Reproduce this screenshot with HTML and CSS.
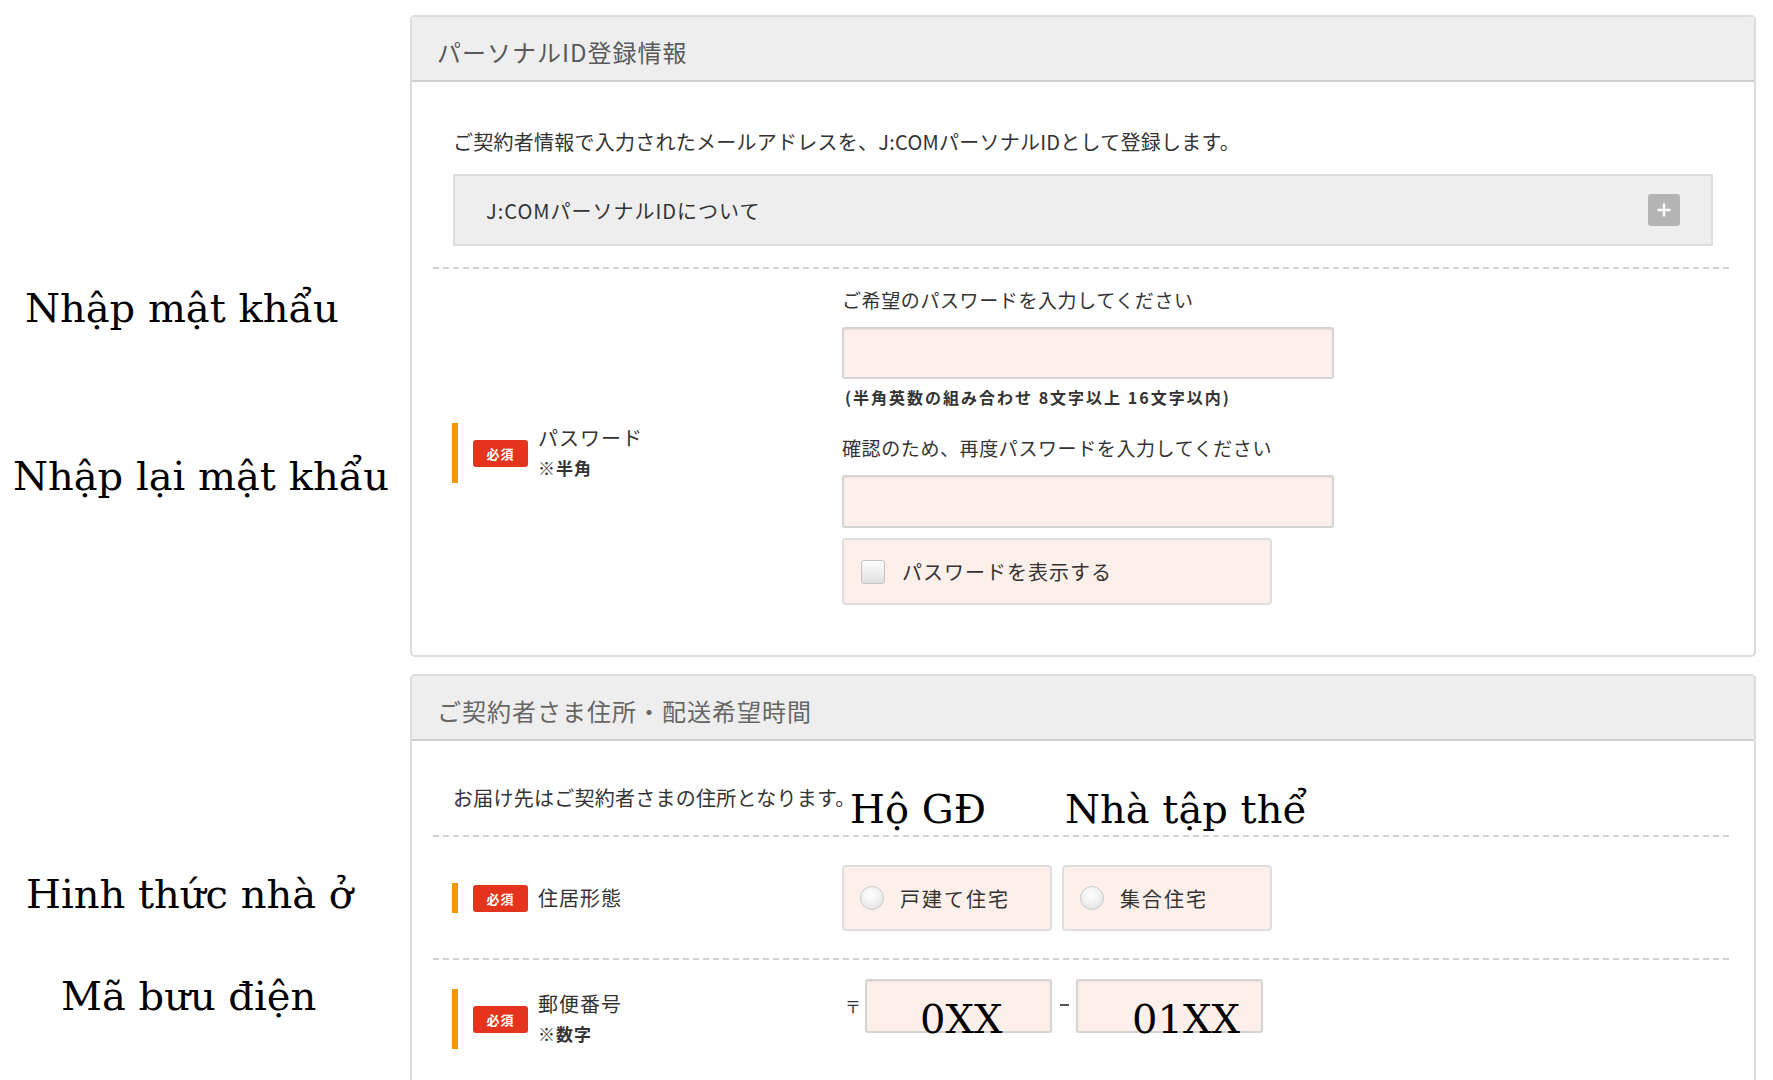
FILE: index.html
```html
<!DOCTYPE html>
<html lang="ja">
<head>
<meta charset="utf-8">
<title>パーソナルID登録情報</title>
<link rel="stylesheet" href="styles.css">
</head>
<body>
<div class="page">
  <main class="form">
    <section class="panel">
      <header class="panel-head"><h2 class="panel-title">パーソナルID登録情報</h2></header>
      <div class="panel-body">
        <p class="lead">ご契約者情報で入力されたメールアドレスを、J:COMパーソナルIDとして登録します。</p>
        <div class="accordion">
          <span class="acc-label">J:COMパーソナルIDについて</span>
          <span class="acc-btn"><svg width="16" height="16" viewBox="0 0 16 16"><path d="M8 1.5v13M1.5 8h13" stroke="#fff" stroke-width="2.4" fill="none"/></svg></span>
        </div>
        <div class="row row-pw">
          <div class="row-label">
            <span class="bar"></span>
            <span class="badge">必須</span>
            <span class="label-text"><span>パスワード</span><span class="lt-sub">※半角</span></span>
          </div>
          <div class="row-field">
            <p class="field-label">ご希望のパスワードを入力してください</p>
            <div class="input"></div>
            <p class="note">(半角英数の組み合わせ 8文字以上 16文字以内)</p>
            <p class="field-label second">確認のため、再度パスワードを入力してください</p>
            <div class="input tall"></div>
            <div class="check"><span class="checkbox"></span><span>パスワードを表示する</span></div>
          </div>
        </div>
      </div>
    </section>

    <section class="panel">
      <header class="panel-head"><h2 class="panel-title title2">ご契約者さま住所・配送希望時間</h2></header>
      <div class="panel-body">
        <p class="lead lead2">お届け先はご契約者さまの住所となります。</p>
        <div class="row row-radio">
          <div class="row-label">
            <span class="bar"></span>
            <span class="badge">必須</span>
            <span class="label-text"><span>住居形態</span></span>
          </div>
          <div class="row-field radios">
            <div class="radio"><span class="radio-dot"></span><span>戸建て住宅</span></div>
            <div class="radio"><span class="radio-dot"></span><span>集合住宅</span></div>
          </div>
        </div>
        <div class="row row-zip">
          <div class="row-label">
            <span class="bar"></span>
            <span class="badge">必須</span>
            <span class="label-text"><span>郵便番号</span><span class="lt-sub">※数字</span></span>
          </div>
          <div class="row-field zips">
            <span class="zip-mark">〒</span>
            <div class="input zip"></div>
            <span class="zip-dash"><span class="zip-dash-line"></span></span>
            <div class="input zip"></div>
          </div>
        </div>
        <div class="row row-next"></div>
      </div>
    </section>
  </main>

  <span class="vi vi-pw">Nhập mật khẩu</span>
  <span class="vi vi-pw2">Nhập lại mật khẩu</span>
  <span class="vi vi-house">Hinh thức nhà ở</span>
  <span class="vi vi-zip">Mã bưu điện</span>
  <span class="vi vi-ho">Hộ GĐ</span>
  <span class="vi vi-tap">Nhà tập thể</span>
  <span class="vi vi-z1">0XX</span>
  <span class="vi vi-z2">01XX</span>
</div>
</body>
</html>
```

FILE: styles.css
```css
* { box-sizing: border-box; }
html, body { margin: 0; padding: 0; background: #fff; }
body {
  width: 1773px;
  height: 1080px;
  overflow: hidden;
  font-family: "Noto Sans CJK JP", "Noto Sans", sans-serif;
  color: #333;
}
.page {
  position: relative;
  display: flex;
  padding: 15px 0 0 410px;
}
.form {
  width: 1346px;
  display: flex;
  flex-direction: column;
  gap: 17px;
}
.panel {
  border: 2px solid #dcdcdc;
  border-radius: 5px;
  background: #fff;
  overflow: hidden;
}
.panel-head {
  background: #eeeeee;
  border-bottom: 2px solid #cfcfcf;
  padding: 20px 25px 13px;
}
.panel-title {
  margin: 0;
  font-size: 24px;
  line-height: 30px;
  font-weight: normal;
  color: #5a5a5a;
  letter-spacing: 1px;
}
.title2 { color: #666; }
.panel-body { padding: 0 22px 0 21px; }
.lead {
  margin: 0;
  padding: 45px 0 0 20px;
  font-size: 20px;
  line-height: 30px;
  letter-spacing: 0.25px;
}
.lead2 { padding-top: 42px; }
.accordion {
  margin: 17px 19px 0 20px;
  height: 72px;
  border: 2px solid #dedede;
  background: #eeeeee;
  display: flex;
  align-items: center;
  justify-content: space-between;
  padding: 0 31px;
  font-size: 20px;
  letter-spacing: 1px;
}
.acc-btn {
  width: 32px;
  height: 32px;
  background: #b4b4b4;
  border-radius: 3px;
  display: flex;
  align-items: center;
  justify-content: center;
}
.row {
  display: flex;
  padding-left: 19px;
  background-image: repeating-linear-gradient(to right, #d2d2d2 0 6px, transparent 6px 10px);
  background-size: 100% 2px;
  background-repeat: no-repeat;
  background-position: top left;
}
.row-pw { margin-top: 21px; padding-top: 18px; padding-bottom: 50px; }
.row-radio { margin-top: 22px; padding-top: 30px; padding-bottom: 27px; align-items: center; }
.row-zip { padding-top: 21px; padding-bottom: 37px; align-items: flex-start; }
.row-next { height: 120px; }
.row-label {
  width: 390px;
  flex: none;
  display: flex;
  align-items: stretch;
}
.row-pw .row-label { align-self: center; margin-top: 16px; }
.row-zip .row-label { margin-top: 10px; }
.bar { width: 6px; background: #f39800; margin-right: 15px; flex: none; }
.badge {
  align-self: center;
  width: 55px;
  height: 27px;
  flex: none;
  background: #e5341d;
  color: #fff;
  border-radius: 3px;
  font-size: 13px;
  font-weight: bold;
  display: flex;
  align-items: center;
  justify-content: center;
  margin-right: 10px;
  letter-spacing: 1px;
}
.label-text {
  display: flex;
  flex-direction: column;
  font-size: 20px;
  line-height: 30px;
  letter-spacing: 1px;
}
.lt-sub { font-size: 17px; font-weight: bold; }
.row-field { display: flex; flex-direction: column; }
.field-label {
  margin: 0;
  font-size: 19px;
  line-height: 30px;
  letter-spacing: 0.6px;
}
.field-label.second { margin-top: 25px; }
.input {
  margin-top: 12px;
  width: 492px;
  height: 52px;
  background: #fdefea;
  border: 2px solid #d4d4d4;
  border-radius: 3px;
  box-shadow: inset 0 1px 2px rgba(0,0,0,0.06);
}
.input.tall { height: 53px; }
.note {
  margin: 7px 0 0;
  padding-left: 3px;
  font-size: 16px;
  line-height: 22px;
  letter-spacing: 2px;
  font-weight: bold;
}
.check {
  margin-top: 10px;
  width: 430px;
  height: 67px;
  display: flex;
  align-items: center;
  padding-left: 17px;
  background: #fdefea;
  border: 2px solid #dedede;
  border-radius: 4px;
  font-size: 20px;
  letter-spacing: 1px;
}
.checkbox {
  width: 24px;
  height: 24px;
  border: 1px solid #c4c4c4;
  border-radius: 3px;
  background: linear-gradient(#fdfdfd, #e0e0e0);
  margin-right: 17px;
}
.radios { flex-direction: row; gap: 10px; }
.radio {
  width: 210px;
  height: 66px;
  display: flex;
  align-items: center;
  padding-left: 16px;
  background: #fdefea;
  border: 2px solid #dedede;
  border-radius: 4px;
  font-size: 20px;
  letter-spacing: 2px;
}
.radio-dot {
  width: 24px;
  height: 24px;
  border-radius: 50%;
  border: 1px solid #cacaca;
  background: radial-gradient(circle at 45% 35%, #ffffff 0, #f2f2f2 45%, #d8d8d8 100%);
  margin-right: 16px;
}
.zips { flex-direction: row; align-items: center; }
.zip-mark { width: 23px; padding-left: 3px; font-size: 16px; }
.input.zip { margin-top: 0; width: 187px; height: 54px; }
.zip-dash { width: 24px; display: flex; justify-content: center; align-items: center; }
.zip-dash-line { display: block; width: 9px; height: 2px; background: #555; margin-top: -2px; }

.vi {
  position: absolute;
  font-family: "DejaVu Serif", serif;
  font-size: 40px;
  line-height: 1;
  color: #000;
  white-space: nowrap;
}
.vi-pw { left: 25px; top: 288px; }
.vi-pw2 { left: 13px; top: 456px; }
.vi-house { left: 26px; top: 874px; }
.vi-zip { left: 61px; top: 976px; }
.vi-ho { left: 850px; top: 789px; }
.vi-tap { left: 1065px; top: 789px; }
.vi-z1 { left: 920px; top: 999px; }
.vi-z2 { left: 1132px; top: 999px; }
```
